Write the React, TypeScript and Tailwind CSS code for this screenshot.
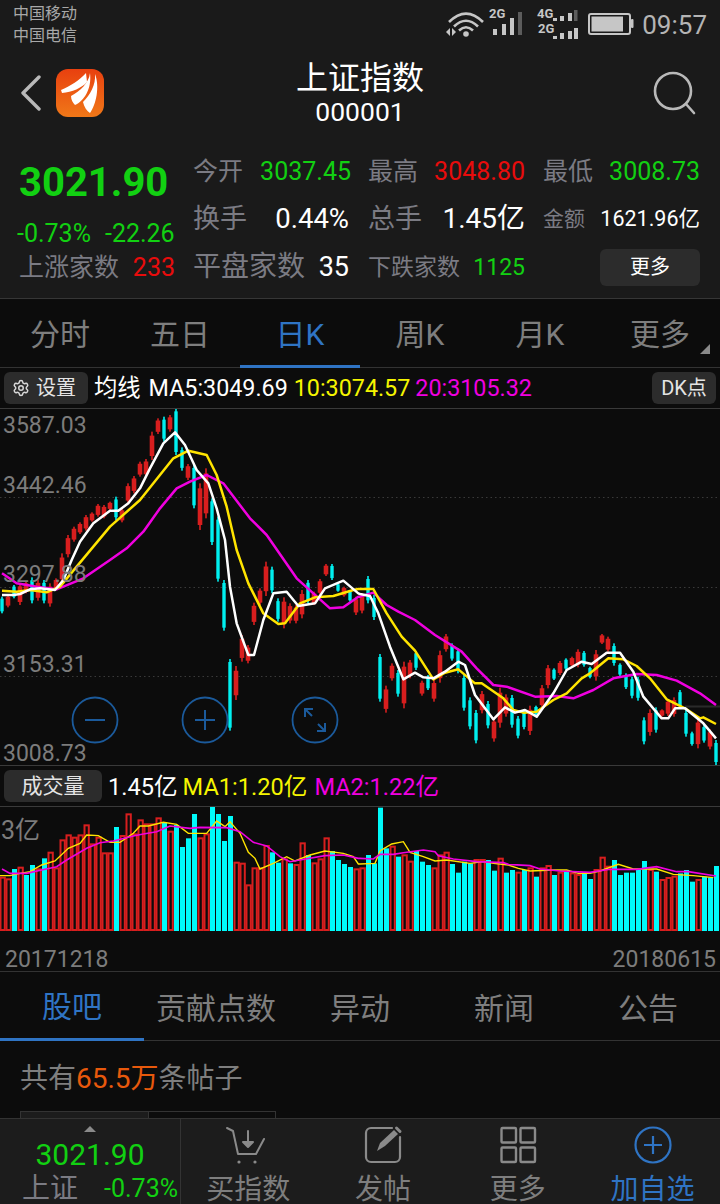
import React from 'react';
import { Settings } from 'lucide-react';

type C = [0 | 1, number, number];
// [0 red / 1 cyan, top, bottom] in 3x zoom px, y = 360 + v / 3, x = 2 + 6i
const candles: C[] = [
[1,710,760],[0,705,742],[1,675,715],[0,670,735],[0,665,700],[1,652,730],[0,660,722],[1,660,730],[0,670,740],[0,655,690],
[0,580,670],[0,525,592],[0,500,545],[0,487,522],[0,465,512],[0,457,485],[0,432,470],[0,435,475],[0,425,450],[1,410,480],
[0,445,487],[0,370,430],[0,348,400],[0,305,350],[0,297,350],[0,215,300],[0,175,222],[1,170,245],[0,165,215],[1,145,285],
[1,262,332],[0,312,360],[1,315,445],[0,370,510],[0,325,475],[1,415,555],[1,470,665],[1,660,812],[1,897,1112],[0,918,1020],
[0,825,905],[0,855,910],[0,728,795],[0,685,735],[0,605,708],[1,620,700],[1,715,785],[0,712,805],[0,730,790],[0,735,790],
[0,690,775],[1,660,730],[0,695,735],[0,657,705],[0,612,648],[1,612,660],[1,670,695],[0,680,710],[1,690,725],[0,710,765],
[0,700,760],[1,648,730],[1,705,780],[1,882,1025],[0,977,1058],[0,910,962],[1,930,1010],[0,905,1045],[0,900,955],[1,873,930],
[0,962,1007],[1,945,990],[0,960,1025],[0,872,968],[0,822,875],[1,850,902],[1,865,940],[1,945,1052],[1,1012,1108],[1,1050,1150],
[0,993,1060],[1,1023,1105],[0,1075,1145],[0,983,1103],[0,1003,1070],[1,1005,1103],[1,1068,1135],[1,1048,1108],[0,1037,1125],[1,1037,1070],
[0,975,1045],[0,915,985],[1,925,960],[0,903,945],[1,895,930],[0,890,920],[0,868,922],[1,873,920],[1,920,955],[0,870,962],
[0,822,852],[0,830,875],[1,850,917],[1,910,948],[1,940,987],[1,950,1015],[1,950,1022],[1,1072,1153],[0,1048,1127],[1,1042,1118],
[0,1048,1070],[0,1018,1068],[0,1012,1070],[1,990,1045],[1,1050,1130],[1,1115,1157],[0,1075,1165],[1,1095,1148],[0,1108,1168],[1,1140,1215],
];

// [0 red / 1 cyan, top] y = 765 + v / 3, x = 6i
const vols: [0 | 1, number][] = [
[0,335],[0,340],[1,312],[0,305],[1,330],[1,300],[0,310],[1,280],[0,260],[0,307],
[0,223],[0,208],[0,215],[0,208],[0,178],[0,235],[0,215],[0,262],[0,262],[1,186],
[0,210],[0,145],[0,205],[0,163],[0,175],[0,175],[0,157],[1,172],[0,197],[1,180],
[1,246],[1,220],[1,147],[0,217],[0,205],[1,123],[1,147],[1,228],[1,153],[0,290],
[0,293],[0,358],[0,307],[0,307],[0,240],[1,262],[1,293],[0,280],[1,295],[0,297],
[0,232],[1,270],[0,292],[0,280],[0,217],[1,258],[1,285],[1,297],[1,306],[0,310],
[0,307],[1,270],[1,295],[1,128],[1,250],[0,242],[1,275],[0,268],[0,287],[1,258],
[1,290],[1,300],[0,307],[0,268],[0,260],[1,297],[1,323],[1,290],[1,295],[0,282],
[0,282],[1,285],[1,317],[0,278],[1,323],[1,315],[0,320],[1,315],[0,307],[1,335],
[0,307],[0,300],[1,330],[0,320],[1,318],[0,322],[0,327],[1,322],[1,342],[0,312],
[0,275],[0,302],[1,285],[1,330],[1,323],[1,323],[1,315],[1,288],[0,312],[1,320],
[0,342],[0,336],[0,332],[1,325],[1,315],[1,350],[0,342],[1,335],[1,337],[1,303],
];

const pts = (a: number[], b: number[], oy: number) => {
  const out: string[] = [];
  for (let i = 0; i < a.length; i += 2) out.push(`${a[i] / 3},${oy + a[i + 1] / 3}`);
  for (let i = 0; i < b.length; i += 2) out.push(`${(b[i] + 1080) / 3},${oy + b[i + 1] / 3}`);
  return out.join(' ');
};

const ma5 = pts(
  [6,705,40,705,60,702,90,688,120,685,165,690,190,660,215,600,240,545,280,490,330,452,355,452,385,430,420,385,450,325,490,250,525,217,555,255,590,330,625,370,650,445,675,540,690,680,710,790,745,885,762,885,790,780,820,700,860,695,895,738,945,730,975,685,1030,662,1075,700],
  [0,702,30,708,55,760,90,860,130,958,165,938,190,952,220,955,255,935,295,905,315,915,345,1005,400,1078,435,1042,465,1058,495,1050,530,1070,580,1000,620,930,665,905,695,912,740,878,780,878,820,935,850,1010,905,1075,925,1075,945,1045,975,1045,1030,1090,1068,1135],
  360);
const ma10 = pts(
  [6,692,50,695,90,690,140,697,180,680,230,620,330,500,420,420,520,295,565,272,620,285,650,345,680,440,710,570,745,670,790,760,835,792,855,790,900,730,945,712,1000,708,1060,690,1075,687],
  [0,687,40,687,80,760,125,830,165,872,220,958,255,938,295,928,345,970,365,970,430,1015,460,1050,490,1058,530,1055,580,1020,620,1000,665,955,690,940,745,895,790,898,830,918,870,955,920,1018,975,1045,1020,1075,1030,1072,1068,1092],
  360);
const ma20 = pts(
  [6,640,50,670,110,680,170,688,250,655,330,600,380,565,430,515,480,445,530,385,570,365,620,345,670,370,750,475,800,525,890,655,990,745,1030,742,1075,710],
  [0,710,40,698,80,735,115,755,165,780,225,825,305,875,350,925,400,975,440,980,525,1010,590,1008,640,1015,700,990,760,955,830,942,890,945,950,962,1020,1000,1068,1035],
  360);
const vma1 = pts(
  [0,332,30,332,60,325,90,320,125,300,165,288,205,250,240,235,260,210,295,212,330,232,360,232,400,205,420,183,445,183,490,172,530,178,565,205,620,205,650,168,675,185,690,170,720,205,745,262,765,280,780,312,820,295,860,275,885,288,930,270,975,258,1030,265,1060,275,1075,297],
  [0,297,45,295,60,258,95,237,130,230,150,262,190,275,225,288,260,285,330,295,370,290,400,295,445,300,475,310,510,318,580,315,620,315,655,325,690,325,720,318,775,298,820,312,890,312,940,328,1000,332,1060,338],
  765);
const vma2 = pts(
  [6,312,30,325,80,325,125,315,170,305,200,285,260,250,300,233,340,228,400,213,430,207,470,200,510,183,570,190,600,187,680,188,720,200,760,232,800,243,840,275,870,290,930,280,975,272,1030,270,1075,280],
  [0,280,40,282,60,268,100,268,130,263,190,255,225,260,235,272,280,282,350,290,430,293,445,298,510,302,540,312,600,318,690,322,750,313,830,313,890,305,950,320,985,320,1068,333],
  765);

function KChart() {
  return (
    <svg width="720" height="356" viewBox="0 409 720 356" className="block">
      {[497, 587, 676].map((y) => (
        <line key={y} x1="0" x2="720" y1={y + 0.5} y2={y + 0.5} stroke="#3a3a3a" strokeDasharray="1.5 3" />
      ))}
      <rect x="685" y="705.5" width="35" height="2" fill="#2a2a2a" />
      {candles.map(([t, a, b], i) => {
        const top = 360 + a / 3;
        const bot = 360 + b / 3;
        const h = bot - top;
        const cx = 2 + 6 * i;
        const color = t ? '#00f0f0' : '#d81e1e';
        const w = t ? 3.4 : 4.6;
        const inset = t ? Math.min(h * 0.12, 3) : Math.min(h * 0.14, 5);
        return (
          <g key={i}>
            <rect x={cx - 0.8} y={top} width="1.6" height={h} fill={color} />
            <rect x={cx - w / 2} y={top + inset} width={w} height={h - 2 * inset} fill={color} />
          </g>
        );
      })}
      <polyline points={ma20} fill="none" stroke="#f000e0" strokeWidth="2.5" strokeLinejoin="round" />
      <polyline points={ma10} fill="none" stroke="#ffe400" strokeWidth="2.5" strokeLinejoin="round" />
      <polyline points={ma5} fill="none" stroke="#ffffff" strokeWidth="2.5" strokeLinejoin="round" />
    </svg>
  );
}

function VolChart() {
  return (
    <svg width="720" height="125" viewBox="0 807 720 125" className="block">
      {vols.map(([t, a], i) => {
        const top = 765 + a / 3;
        return t ? (
          <rect key={i} x={6 * i} y={top} width="5" height={931 - top} fill="#00fafa" />
        ) : (
          <rect key={i} x={6 * i + 0.5} y={top + 1} width="4.3" height={930 - top - 1} fill="none" stroke="#d81e1e" strokeWidth="2" />
        );
      })}
      <polyline points={vma1} fill="none" stroke="#ffe400" strokeWidth="1.4" />
      <polyline points={vma2} fill="none" stroke="#f000e0" strokeWidth="1.6" />
    </svg>
  );
}

function StatusIcons() {
  const g = '#c6c6c6';
  const bar = (x: number, y: number, w: number, b: number, dim?: boolean) => (
    <rect x={x} y={y} width={w} height={b - y} fill={dim ? '#5c5c5c' : g} />
  );
  return (
    <svg width="196" height="50" viewBox="440 0 196 50" className="block">
      <g fill="none" stroke={g} strokeWidth="2.6">
        <path d="M449 22 Q466 5 483 22" />
        <path d="M454 26.5 Q466 15 478 26.5" />
        <path d="M459 30.5 Q466 24 473 30.5" />
      </g>
      <circle cx="466" cy="34" r="2.8" fill={g} />
      <path d="M446 32 L450 28 V36 Z M452 28 L456 32 L452 36 Z" fill={g} />
      <text x="489" y="18" fontSize="13" fontWeight="700" fill={g}>2G</text>
      {bar(493, 29, 4, 35)}{bar(502, 24, 4, 35)}{bar(510, 18, 4, 35)}{bar(518, 12, 4, 35, true)}
      <text x="537" y="18" fontSize="13" fontWeight="700" fill={g}>4G</text>
      <text x="538" y="33" fontSize="13" fontWeight="700" fill={g}>2G</text>
      {bar(553, 18, 4, 21)}{bar(560, 16, 4, 21)}{bar(568, 13, 4, 21)}{bar(574, 10, 3.5, 21, true)}
      {bar(553, 36, 4, 39)}{bar(560, 33, 4, 39)}{bar(568, 31, 4, 39)}{bar(574, 28, 4, 39)}
      <rect x="589" y="14" width="41" height="20" rx="2" fill="none" stroke={g} strokeWidth="2" />
      <rect x="591.5" y="16.5" width="31.5" height="15" fill={g} />
      <rect x="631" y="19" width="2.5" height="9" rx="1" fill={g} />
    </svg>
  );
}

function Logo() {
  return (
    <svg width="48" height="48" viewBox="0 0 48 48" className="block">
      <defs>
        <linearGradient id="lg" x1="0" y1="0" x2="0" y2="1">
          <stop offset="0" stopColor="#e8400f" />
          <stop offset="1" stopColor="#f07818" />
        </linearGradient>
      </defs>
      <rect width="48" height="48" rx="12" fill="url(#lg)" />
      <g fill="#fff">
        <path d="M30 4 C24 11 14 17 5 21 L6 24 C16 23 26 19 31 13 Z" />
        <path d="M34 4 C33 14 24 22 15 27 C15 31 17 34 19 36 C28 32 36 20 34 4 Z" />
        <path d="M39 5 C40 16 34 26 27 33 C28 38 31 42 34 44 C40 36 44 18 39 5 Z" />
      </g>
    </svg>
  );
}

function ZoomBtn({ children }: { children: React.ReactNode }) {
  return (
    <svg width="48" height="48" viewBox="0 0 48 48" fill="none" stroke="#1b5a9b" strokeWidth="1.8">
      <circle cx="24" cy="24" r="22.5" />
      {children}
    </svg>
  );
}

const lab = 'text-[#7b7b83]';
const grn = 'text-[#12d012]';
const red = 'text-[#e80c0c]';

export default function App() {
  const topTabs = ['分时', '五日', '日K', '周K', '月K', '更多'];
  const lowTabs = ['股吧', '贡献点数', '异动', '新闻', '公告'];
  return (
    <div className="w-[720px] h-[1204px] overflow-hidden bg-[#0c0c0c] font-[Roboto,'Noto_Sans_CJK_SC',sans-serif] flex flex-col relative">
      {/* header */}
      <div className="h-[299px] shrink-0 bg-[#1a1a1a] border-b border-[#363636] flex flex-col">
        <div className="h-[50px] flex items-center justify-between relative">
          <div className="pl-[13px] text-[16px] leading-[22px] text-[#a8a8a8]">
            <div>中国移动</div>
            <div>中国电信</div>
          </div>
          <div className="flex items-center pr-[13px]">
            <StatusIcons />
            <span className="ml-[6px] text-[26px] leading-none text-[#b4b4b4]">09:57</span>
          </div>
        </div>
        <div className="h-[86px] flex items-center">
          <div className="w-[120px] flex items-center pl-[20px] gap-[15px]">
            <svg width="21" height="36" viewBox="0 0 21 36" fill="none" stroke="#b9b9b9" strokeWidth="3.4" strokeLinecap="round" strokeLinejoin="round">
              <path d="M19 2 L3 18 L19 34" />
            </svg>
            <Logo />
          </div>
          <div className="flex-1 flex flex-col items-center text-white">
            <div className="text-[32px] leading-[38px]">上证指数</div>
            <div className="text-[26.5px] leading-[30px]">000001</div>
          </div>
          <div className="w-[120px] flex justify-end pr-[23px]">
            <svg width="44" height="44" viewBox="0 0 44 44" fill="none" stroke="#b9b9b9" strokeWidth="2.6" strokeLinecap="round">
              <circle cx="20" cy="20" r="18" />
              <path d="M33 33 L41 42" />
            </svg>
          </div>
        </div>
        <div className="pt-[11px] flex">
          <div className="w-[193px] pl-[19px] flex flex-col">
            <div className={`h-[72px] flex items-center text-[40px] font-bold leading-none ${grn}`}>3021.90</div>
            <div className={`h-[28px] flex items-center gap-[14px] text-[25px] leading-none -ml-[2px] ${grn}`}>
              <span>-0.73%</span>
              <span>-22.26</span>
            </div>
            <div className="h-[40px] flex items-center w-[156px] justify-between">
              <span className={`text-[25px] leading-none ${lab}`}>上涨家数</span>
              <span className={`text-[25px] leading-none ${red}`}>233</span>
            </div>
          </div>
          <div className="w-[507px] grid grid-cols-[158px_157px_158px] gap-x-[17px] auto-rows-[48px] items-center">
            <div className="flex items-center justify-between">
              <span className={`text-[25px] leading-none ${lab}`}>今开</span>
              <span className={`text-[25px] leading-none ${grn}`}>3037.45</span>
            </div>
            <div className="flex items-center justify-between">
              <span className={`text-[25px] leading-none ${lab}`}>最高</span>
              <span className={`text-[25px] leading-none ${red}`}>3048.80</span>
            </div>
            <div className="flex items-center justify-between pl-[1px]">
              <span className={`text-[25px] leading-none ${lab}`}>最低</span>
              <span className={`text-[25px] leading-none ${grn}`}>3008.73</span>
            </div>
            <div className="flex items-center justify-between">
              <span className={`text-[27px] leading-none ${lab}`}>换手</span>
              <span className="text-[27.5px] leading-none text-white mr-[2px]">0.44%</span>
            </div>
            <div className="flex items-center justify-between">
              <span className={`text-[27px] leading-none ${lab}`}>总手</span>
              <span className="text-[28px] leading-none text-white">1.45亿</span>
            </div>
            <div className="flex items-center justify-between pl-[1px]">
              <span className={`text-[21px] leading-none ${lab}`}>金额</span>
              <span className="text-[21.5px] leading-none text-white">1621.96亿</span>
            </div>
            <div className="flex items-center justify-between">
              <span className={`text-[28px] leading-none ${lab}`}>平盘家数</span>
              <span className="text-[27px] leading-none text-white mr-[2px]">35</span>
            </div>
            <div className="flex items-center justify-between">
              <span className={`text-[23px] leading-none ${lab}`}>下跌家数</span>
              <span className={`text-[23px] leading-none ${grn}`}>1125</span>
            </div>
            <div className="flex justify-end">
              <div className="w-[100px] h-[37px] bg-[#2c2c2c] rounded-[6px] flex items-center justify-center text-[20px] text-white">更多</div>
            </div>
          </div>
        </div>
      </div>

      {/* period tabs */}
      <div className="h-[69px] shrink-0 flex border-b border-[#333] relative">
        {topTabs.map((t, i) => (
          <div
            key={t}
            className={`w-[120px] h-[69px] flex items-center justify-center text-[30px] leading-none pt-[5px] border-b-[3px] relative ${
              i === 2 ? 'text-[#2f74c4] border-[#2f74c4]' : 'text-[#7e7e7e] border-transparent'
            }`}
          >
            {t}
            {i === 5 && (
              <svg className="absolute right-[10px] bottom-[11px]" width="10" height="10" viewBox="0 0 10 10">
                <path d="M10 0 V10 H0 Z" fill="#8a8a8a" />
              </svg>
            )}
          </div>
        ))}
      </div>

      {/* MA bar */}
      <div className="h-[41px] shrink-0 flex items-center border-b border-[#3a3a3a] pl-[4px] pr-[4px] text-[23.3px] leading-none">
        <div className="w-[84px] h-[32px] bg-[#2c2c2c] rounded-[6px] flex items-center pl-[8px] gap-[6px] text-[20px] text-[#e4e4e4]">
          <Settings size={18} strokeWidth={2} className="text-[#d8d8d8]" />
          <span>设置</span>
        </div>
        <span className="ml-[6px] text-white pt-[2px]">均线</span>
        <span className="ml-[8px] text-white pt-[2px]">MA5:3049.69</span>
        <span className="ml-[6px] text-[#f5f500] pt-[2px]">10:3074.57</span>
        <span className="ml-[5px] text-[#f000e0] pt-[2px]">20:3105.32</span>
        <div className="ml-auto w-[64px] h-[32px] bg-[#2c2c2c] rounded-[6px] flex items-center justify-center text-[20px] text-[#e4e4e4]">DK点</div>
      </div>

      {/* K chart */}
      <div className="h-[357px] shrink-0 relative border-b border-[#3a3a3a]">
        <KChart />
        <span className="absolute left-[3px] top-[4px] text-[23px] leading-[26px] text-[#7c7c7c]">3587.03</span>
        <span className="absolute left-[3px] top-[64px] text-[23px] leading-[26px] text-[#7c7c7c]">3442.46</span>
        <span className="absolute left-[3px] top-[153px] text-[23px] leading-[26px] text-[#7c7c7c]">3297.88</span>
        <span className="absolute left-[3px] top-[243px] text-[23px] leading-[26px] text-[#7c7c7c]">3153.31</span>
        <span className="absolute left-[3px] top-[332px] text-[23px] leading-[26px] text-[#7c7c7c]">3008.73</span>
        <div className="absolute left-[71px] top-[287px] flex gap-[62px]">
          <ZoomBtn><path d="M14 24 H34" strokeWidth="2" /></ZoomBtn>
          <ZoomBtn><path d="M14 24 H34 M24 14 V34" strokeWidth="2" /></ZoomBtn>
          <ZoomBtn>
            <path d="M14 21 V13 H22 M14 13 L21 20 M34 27 V35 H26 M34 35 L27 28" strokeWidth="2" />
          </ZoomBtn>
        </div>
      </div>

      {/* volume bar */}
      <div className="h-[41px] shrink-0 flex items-center border-b border-[#3a3a3a] pl-[4px] text-[23.6px] leading-none">
        <div className="w-[98px] h-[32px] bg-[#2c2c2c] rounded-[6px] flex items-center justify-center text-[21px] text-[#e4e4e4]">成交量</div>
        <span className="ml-[6px] text-white pt-[3px]">1.45亿</span>
        <span className="ml-[5px] text-[#f5f500] pt-[3px]">MA1:1.20亿</span>
        <span className="ml-[7px] text-[#f000e0] pt-[3px]">MA2:1.22亿</span>
      </div>

      {/* volume chart */}
      <div className="h-[165px] shrink-0 relative border-b border-[#333]">
        <VolChart />
        <span className="absolute left-[1px] top-[9px] text-[25px] leading-[30px] text-[#7c7c7c]">3亿</span>
        <div className="flex justify-between pl-[5px] pr-[4px] text-[23px] leading-[26px] text-[#7c7c7c] mt-[15px]">
          <span>20171218</span>
          <span>20180615</span>
        </div>
      </div>

      {/* lower tabs */}
      <div className="h-[69px] shrink-0 flex border-b border-[#333]">
        {lowTabs.map((t, i) => (
          <div
            key={t}
            className={`w-[144px] h-[69px] flex items-center justify-center text-[30px] leading-none pt-[4px] ${
              i === 0 ? 'text-[#2f74c4] border-b-[3px] border-[#2f74c4]' : 'text-[#7e7e7e]'
            }`}
          >
            {t}
          </div>
        ))}
      </div>

      {/* post count */}
      <div className="flex-1 min-h-0 flex flex-col pl-[20px] overflow-hidden">
        <div className="h-[70px] shrink-0 flex items-center text-[28px] leading-none text-[#7e7e7e] pt-[5px]">
          共有<span className="text-[#e8590c]">65.5万</span>条帖子
        </div>
        <div className="w-[256px] h-[20px] shrink-0 flex border border-[#333]">
          <div className="w-[128px] bg-[#1c1c1c] border-r border-[#333]" />
        </div>
      </div>

      {/* bottom bar */}
      <div className="h-[86px] shrink-0 bg-[#1c1c1c] border-t border-[#333] flex">
        <div className="w-[181px] shrink-0 border-r border-[#333] flex flex-col items-center relative">
          <svg className="mt-[7px]" width="14" height="7" viewBox="0 0 14 7"><path d="M0 7 L7 0 L14 7 Z" fill="#8a8a8a" /></svg>
          <span className={`mt-[5px] text-[30px] leading-[36px] ${grn}`}>3021.90</span>
          <div className="w-full flex items-center justify-between pl-[22px] pr-[2px] mt-[1px]">
            <span className={`text-[28px] leading-[30px] ${lab}`}>上证</span>
            <span className={`text-[25px] leading-[30px] ${grn}`}>-0.73%</span>
          </div>
        </div>
        <div className="flex-1 grid grid-cols-4 text-[28px] leading-none text-[#7e7e7e]">
          <div className="flex flex-col items-center pt-[6px]">
            <svg width="44" height="44" viewBox="0 0 44 44" fill="none" stroke="#8a8a8a" strokeWidth="2" strokeLinecap="round" strokeLinejoin="round">
              <path d="M1 3 L7 6 L12 29 H30 L38 14" />
              <path d="M22 6 V17" />
              <path d="M17 17 H27 L22 22 Z" fill="#8a8a8a" />
              <circle cx="13" cy="37" r="1.6" fill="#8a8a8a" stroke="none" />
              <circle cx="29" cy="37" r="1.6" fill="#8a8a8a" stroke="none" />
            </svg>
            <span className="mt-[7px]">买指数</span>
          </div>
          <div className="flex flex-col items-center pt-[6px]">
            <svg width="44" height="44" viewBox="0 0 44 44" fill="none" stroke="#8a8a8a" strokeWidth="2.2" strokeLinecap="round" strokeLinejoin="round">
              <path d="M31 3 H10 a5 5 0 0 0 -5 5 V32 a5 5 0 0 0 5 5 H34 a5 5 0 0 0 5 -5 V12" />
              <path d="M16 26 L19 18 L33 5 L37 9 L24 21 Z" fill="#8a8a8a" stroke="none" />
              <path d="M35.5 3 L39 6.5" strokeWidth="3" />
            </svg>
            <span className="mt-[7px]">发帖</span>
          </div>
          <div className="flex flex-col items-center pt-[6px]">
            <svg width="44" height="44" viewBox="0 0 44 44" fill="none" stroke="#8a8a8a" strokeWidth="2.4">
              <rect x="5.5" y="3" width="14.5" height="14.5" rx="1" />
              <rect x="24.5" y="3" width="14.5" height="14.5" rx="1" />
              <rect x="5.5" y="22.5" width="14.5" height="14.5" rx="1" />
              <rect x="24.5" y="22.5" width="14.5" height="14.5" rx="1" />
            </svg>
            <span className="mt-[7px]">更多</span>
          </div>
          <div className="flex flex-col items-center pt-[6px] text-[#2f74c4]">
            <svg width="44" height="44" viewBox="0 0 44 44" fill="none" stroke="#2f74c4" strokeWidth="2.2">
              <circle cx="22" cy="20" r="17.5" />
              <path d="M13 20 H31 M22 11 V29" />
            </svg>
            <span className="mt-[7px]">加自选</span>
          </div>
        </div>
      </div>
    </div>
  );
}
